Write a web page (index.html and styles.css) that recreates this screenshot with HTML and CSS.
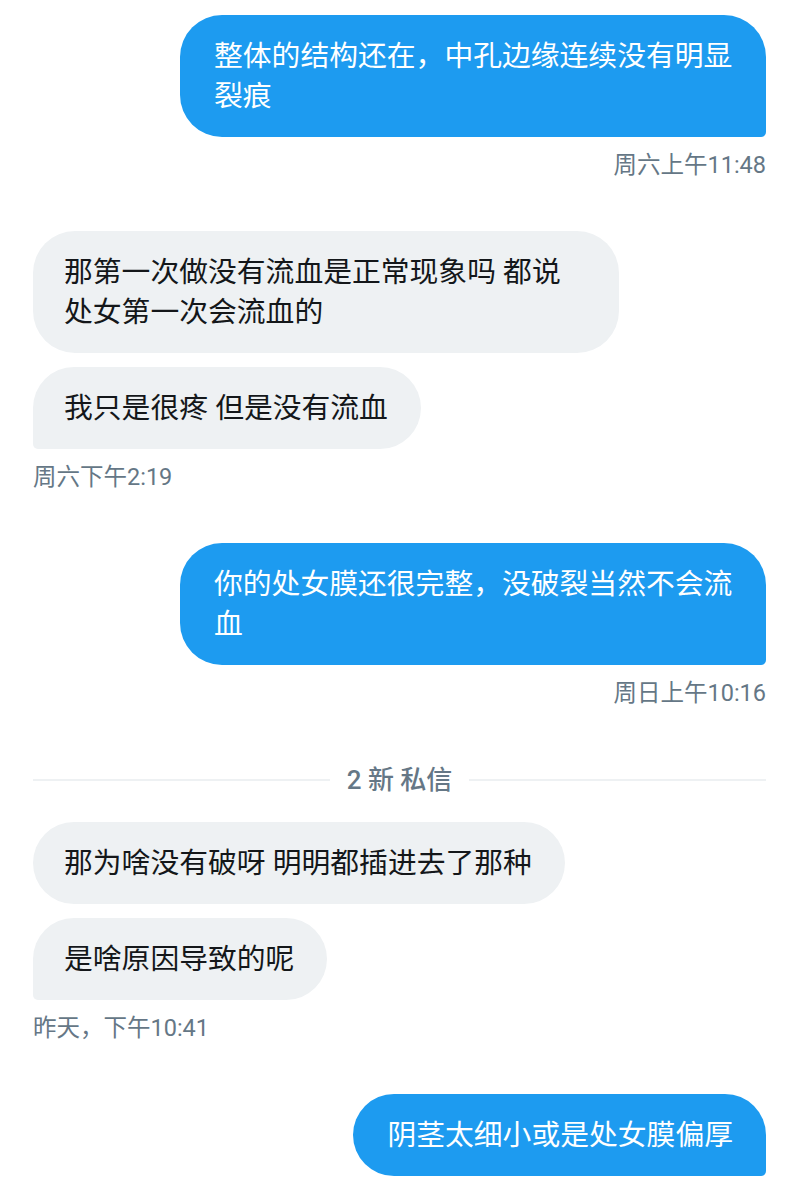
FILE: index.html
```html
<!DOCTYPE html>
<html lang="zh-CN">

<head>
  <meta charset="UTF-8">
  <meta name="viewport" content="width=device-width, initial-scale=1.0">
  <title>私信</title>
  <link rel="stylesheet" href="styles.css">
</head>

<body>
  <div class="chat">

    <!-- 我发出的消息 -->
    <div class="group sent first">
      <div class="bubble wide tail">整体的结构还在，中孔边缘连续没有明显<br>裂痕</div>
      <div class="time">周六上午11:48</div>
    </div>

    <!-- 对方的消息 -->
    <div class="group received">
      <div class="bubble wide">那第一次做没有流血是正常现象吗 都说<br>处女第一次会流血的</div>
      <div class="bubble tail">我只是很疼 但是没有流血</div>
      <div class="time">周六下午2:19</div>
    </div>

    <div class="group sent">
      <div class="bubble wide tail">你的处女膜还很完整，没破裂当然不会流<br>血</div>
      <div class="time">周日上午10:16</div>
    </div>

    <!-- 新消息分隔线 -->
    <div class="divider"><span>2 新 私信</span></div>

    <div class="group received after-divider">
      <div class="bubble">那为啥没有破呀 明明都插进去了那种</div>
      <div class="bubble tail">是啥原因导致的呢</div>
      <div class="time">昨天，下午10:41</div>
    </div>

    <div class="group sent">
      <div class="bubble tail">阴茎太细小或是处女膜偏厚</div>
    </div>

  </div>

  <div class="composer-line"></div>
</body>

</html>
```

FILE: styles.css
```css
body {
  margin: 0;
  background-color: #fff;
  font-family: Roboto, "Noto Sans CJK SC", sans-serif;
  color: #14171a;
}

.chat {
  padding: 0 33px;
  height: 1186px;
  box-sizing: border-box;
}

.group {
  display: flex;
  flex-direction: column;
  gap: 14px;
  margin-top: 51px;
}

.group.first {
  margin-top: 15px;
}

.group.after-divider {
  margin-top: 27px;
}

.sent {
  align-items: flex-end;
}

.received {
  align-items: flex-start;
}

.bubble {
  max-width: 586px;
  box-sizing: border-box;
  padding: 21px 33px;
  font-size: 28.8px;
  line-height: 40px;
  border-radius: 42px;
}

.bubble.wide {
  width: 586px;
}

.sent .bubble {
  background-color: #1d9bf0;
  color: #fff;
  padding-left: 34px;
}

.received .bubble {
  background-color: #eef1f3;
  color: #14171a;
  padding-left: 31px;
}

/* 最后一条消息的小角 */
.sent .bubble.tail {
  border-bottom-right-radius: 5px;
}

.received .bubble.tail {
  border-bottom-left-radius: 5px;
}

.time {
  font-size: 23.5px;
  line-height: 30px;
  color: #657786;
  margin-top: -1px;
}

.divider {
  display: flex;
  align-items: center;
  gap: 17px;
  margin-top: 57px;
  font-size: 26px;
  line-height: 30px;
  font-weight: 500;
  color: #657786;
}

.divider::before,
.divider::after {
  content: "";
  flex: 1;
  height: 2px;
  background-color: #eef1f3;
}

.composer-line {
  height: 2px;
  background-color: #eef1f3;
}
```
